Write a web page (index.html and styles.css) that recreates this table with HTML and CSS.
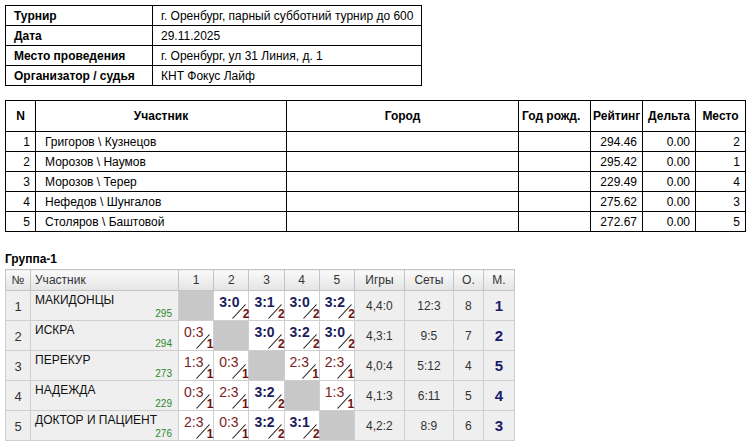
FILE: index.html
```html
<!DOCTYPE html>
<html lang="ru">
<head>
<meta charset="utf-8">
<title>Турнир</title>
<link rel="stylesheet" href="styles.css">
</head>
<body>
<table class="info">
  <colgroup><col class="c-label"><col class="c-value"></colgroup>
  <tr><th>Турнир</th><td>г. Оренбург, парный субботний турнир до 600</td></tr>
  <tr><th>Дата</th><td>29.11.2025</td></tr>
  <tr><th>Место проведения</th><td>г. Оренбург, ул 31 Линия, д. 1</td></tr>
  <tr><th>Организатор / судья</th><td>КНТ Фокус Лайф</td></tr>
</table>

<table class="players">
  <colgroup>
    <col class="p-n"><col class="p-name"><col class="p-city"><col class="p-year">
    <col class="p-rating"><col class="p-delta"><col class="p-place">
  </colgroup>
  <tr class="head">
    <th>N</th><th>Участник</th><th>Город</th><th class="left">Год рожд.</th><th>Рейтинг</th><th>Дельта</th><th>Место</th>
  </tr>
  <tr><td class="num">1</td><td class="name">Григоров \ Кузнецов</td><td></td><td></td><td class="num">294.46</td><td class="num">0.00</td><td class="num">2</td></tr>
  <tr><td class="num">2</td><td class="name">Морозов \ Наумов</td><td></td><td></td><td class="num">295.42</td><td class="num">0.00</td><td class="num">1</td></tr>
  <tr><td class="num">3</td><td class="name">Морозов \ Терер</td><td></td><td></td><td class="num">229.49</td><td class="num">0.00</td><td class="num">4</td></tr>
  <tr><td class="num">4</td><td class="name">Нефедов \ Шунгалов</td><td></td><td></td><td class="num">275.62</td><td class="num">0.00</td><td class="num">3</td></tr>
  <tr><td class="num">5</td><td class="name">Столяров \ Баштовой</td><td></td><td></td><td class="num">272.67</td><td class="num">0.00</td><td class="num">5</td></tr>
</table>

<div class="group-title">Группа-1</div>
<table class="group">
  <colgroup>
    <col class="g-n"><col class="g-name">
    <col class="g-s"><col class="g-s"><col class="g-s"><col class="g-s"><col class="g-s">
    <col class="g-games"><col class="g-sets"><col class="g-pts"><col class="g-pl">
  </colgroup>
  <tr class="ghead">
    <th>№</th><th class="left">Участник</th><th>1</th><th>2</th><th>3</th><th>4</th><th>5</th><th>Игры</th><th>Сеты</th><th>О.</th><th>М.</th>
  </tr>
  <tr>
    <td class="gn">1</td>
    <td class="gname"><div class="nm">МАКИДОНЦЫ</div><div class="rt">295</div></td>
    <td class="self"></td>
    <td class="sc"><div class="cell"><span class="s win">3:0</span><span class="tail"><svg class="sl" viewBox="0 0 17 15"><line x1="0.5" y1="14.5" x2="13.5" y2="0.5"/></svg><b class="d">2</b></span></div></td>
    <td class="sc"><div class="cell"><span class="s win">3:1</span><span class="tail"><svg class="sl" viewBox="0 0 17 15"><line x1="0.5" y1="14.5" x2="13.5" y2="0.5"/></svg><b class="d">2</b></span></div></td>
    <td class="sc"><div class="cell"><span class="s win">3:0</span><span class="tail"><svg class="sl" viewBox="0 0 17 15"><line x1="0.5" y1="14.5" x2="13.5" y2="0.5"/></svg><b class="d">2</b></span></div></td>
    <td class="sc"><div class="cell"><span class="s win">3:2</span><span class="tail"><svg class="sl" viewBox="0 0 17 15"><line x1="0.5" y1="14.5" x2="13.5" y2="0.5"/></svg><b class="d">2</b></span></div></td>
    <td class="gv">4,4:0</td><td class="gv">12:3</td><td class="gv">8</td><td class="gp">1</td>
  </tr>
  <tr>
    <td class="gn">2</td>
    <td class="gname"><div class="nm">ИСКРА</div><div class="rt">294</div></td>
    <td class="sc"><div class="cell"><span class="s loss">0:3</span><span class="tail"><svg class="sl" viewBox="0 0 17 15"><line x1="0.5" y1="14.5" x2="13.5" y2="0.5"/></svg><b class="d">1</b></span></div></td>
    <td class="self"></td>
    <td class="sc"><div class="cell"><span class="s win">3:0</span><span class="tail"><svg class="sl" viewBox="0 0 17 15"><line x1="0.5" y1="14.5" x2="13.5" y2="0.5"/></svg><b class="d">2</b></span></div></td>
    <td class="sc"><div class="cell"><span class="s win">3:2</span><span class="tail"><svg class="sl" viewBox="0 0 17 15"><line x1="0.5" y1="14.5" x2="13.5" y2="0.5"/></svg><b class="d">2</b></span></div></td>
    <td class="sc"><div class="cell"><span class="s win">3:0</span><span class="tail"><svg class="sl" viewBox="0 0 17 15"><line x1="0.5" y1="14.5" x2="13.5" y2="0.5"/></svg><b class="d">2</b></span></div></td>
    <td class="gv">4,3:1</td><td class="gv">9:5</td><td class="gv">7</td><td class="gp">2</td>
  </tr>
  <tr>
    <td class="gn">3</td>
    <td class="gname"><div class="nm">ПЕРЕКУР</div><div class="rt">273</div></td>
    <td class="sc"><div class="cell"><span class="s loss">1:3</span><span class="tail"><svg class="sl" viewBox="0 0 17 15"><line x1="0.5" y1="14.5" x2="13.5" y2="0.5"/></svg><b class="d">1</b></span></div></td>
    <td class="sc"><div class="cell"><span class="s loss">0:3</span><span class="tail"><svg class="sl" viewBox="0 0 17 15"><line x1="0.5" y1="14.5" x2="13.5" y2="0.5"/></svg><b class="d">1</b></span></div></td>
    <td class="self"></td>
    <td class="sc"><div class="cell"><span class="s loss">2:3</span><span class="tail"><svg class="sl" viewBox="0 0 17 15"><line x1="0.5" y1="14.5" x2="13.5" y2="0.5"/></svg><b class="d">1</b></span></div></td>
    <td class="sc"><div class="cell"><span class="s loss">2:3</span><span class="tail"><svg class="sl" viewBox="0 0 17 15"><line x1="0.5" y1="14.5" x2="13.5" y2="0.5"/></svg><b class="d">1</b></span></div></td>
    <td class="gv">4,0:4</td><td class="gv">5:12</td><td class="gv">4</td><td class="gp">5</td>
  </tr>
  <tr>
    <td class="gn">4</td>
    <td class="gname"><div class="nm">НАДЕЖДА</div><div class="rt">229</div></td>
    <td class="sc"><div class="cell"><span class="s loss">0:3</span><span class="tail"><svg class="sl" viewBox="0 0 17 15"><line x1="0.5" y1="14.5" x2="13.5" y2="0.5"/></svg><b class="d">1</b></span></div></td>
    <td class="sc"><div class="cell"><span class="s loss">2:3</span><span class="tail"><svg class="sl" viewBox="0 0 17 15"><line x1="0.5" y1="14.5" x2="13.5" y2="0.5"/></svg><b class="d">1</b></span></div></td>
    <td class="sc"><div class="cell"><span class="s win">3:2</span><span class="tail"><svg class="sl" viewBox="0 0 17 15"><line x1="0.5" y1="14.5" x2="13.5" y2="0.5"/></svg><b class="d">2</b></span></div></td>
    <td class="self"></td>
    <td class="sc"><div class="cell"><span class="s loss">1:3</span><span class="tail"><svg class="sl" viewBox="0 0 17 15"><line x1="0.5" y1="14.5" x2="13.5" y2="0.5"/></svg><b class="d">1</b></span></div></td>
    <td class="gv">4,1:3</td><td class="gv">6:11</td><td class="gv">5</td><td class="gp">4</td>
  </tr>
  <tr>
    <td class="gn">5</td>
    <td class="gname"><div class="nm">ДОКТОР И ПАЦИЕНТ</div><div class="rt">276</div></td>
    <td class="sc"><div class="cell"><span class="s loss">2:3</span><span class="tail"><svg class="sl" viewBox="0 0 17 15"><line x1="0.5" y1="14.5" x2="13.5" y2="0.5"/></svg><b class="d">1</b></span></div></td>
    <td class="sc"><div class="cell"><span class="s loss">0:3</span><span class="tail"><svg class="sl" viewBox="0 0 17 15"><line x1="0.5" y1="14.5" x2="13.5" y2="0.5"/></svg><b class="d">1</b></span></div></td>
    <td class="sc"><div class="cell"><span class="s win">3:2</span><span class="tail"><svg class="sl" viewBox="0 0 17 15"><line x1="0.5" y1="14.5" x2="13.5" y2="0.5"/></svg><b class="d">2</b></span></div></td>
    <td class="sc"><div class="cell"><span class="s win">3:1</span><span class="tail"><svg class="sl" viewBox="0 0 17 15"><line x1="0.5" y1="14.5" x2="13.5" y2="0.5"/></svg><b class="d">2</b></span></div></td>
    <td class="self"></td>
    <td class="gv">4,2:2</td><td class="gv">8:9</td><td class="gv">6</td><td class="gp">3</td>
  </tr>
</table>
</body>
</html>
```
FILE: styles.css
```css
* { box-sizing: border-box; }
html, body { background: #fff; }
body {
  margin: 0;
  padding: 5px;
  font-family: "Liberation Sans", Arial, sans-serif;
  font-size: 12px;
  color: #000;
}
table { border-collapse: collapse; table-layout: fixed; }

/* info table */
.info { width: 416px; }
.info .c-label { width: 147px; }
.info .c-value { width: 269px; }
.info th, .info td {
  border: 1px solid #000;
  height: 20px;
  padding: 0 0 0 8px;
  text-align: left;
  white-space: nowrap;
  line-height: 18px;
}
.info th { font-weight: bold; }

/* players table */
.players { width: 740px; margin-top: 14px; }
.p-n { width: 30px; }
.p-name { width: 251px; }
.p-city { width: 232px; }
.p-year { width: 72px; }
.p-rating { width: 52px; }
.p-delta { width: 53px; }
.p-place { width: 50px; }
.players th, .players td {
  border: 1px solid #000;
  height: 20px;
  padding: 0 4px;
  line-height: 18px;
  white-space: nowrap;
}
.players .head th { height: 31px; font-weight: bold; text-align: center; padding: 0 2px; }
.players .head th.left { text-align: left; padding-left: 3px; }
.players td.num { text-align: right; padding-right: 5px; }
.players td.name { padding-left: 9px; }

/* group */
.group-title { font-weight: bold; margin-top: 20px; line-height: 14px; }
.group { width: 509px; margin-top: 3px; color: #222; }
.g-n { width: 25px; }
.g-name { width: 148px; }
.g-s { width: 35.2px; }
.g-games { width: 50px; }
.g-sets { width: 49px; }
.g-pts { width: 30px; }
.g-pl { width: 31px; }
.group th, .group td { border: 1px solid #cfcfcf; padding: 0; }
.group .ghead th {
  height: 21px;
  font-weight: normal;
  text-align: center;
  color: #333;
  background: linear-gradient(#fafafa, #e4e4e4);
  border-color: #c4c4c4;
}
.group .ghead th.left { text-align: left; padding-left: 4px; }
.group td { height: 30px; background: #efefef; }
.group td.gn { text-align: center; font-size: 13px; color: #333; padding-top: 2px; }
.group td.gname { vertical-align: top; padding: 2px 4px 0 4px; }
.gname .nm { line-height: 15px; color: #111; white-space: nowrap; }
.gname .rt { text-align: right; font-size: 10px; line-height: 11px; color: #2b8a2b; margin-right: 2px; }
.group td.self { background: #c8c8c8; }
.group td.sc { background: #fff; vertical-align: top; }
.group td.gv { text-align: center; font-size: 12px; color: #333; }
.group td.gp { text-align: center; font-size: 15px; font-weight: bold; color: #1b1b6b; }

.cell {
  height: 29px;
  display: flex;
  align-items: flex-start;
  padding: 3px 0 1px 5px;
}
.s { font-size: 14px; line-height: 16px; white-space: nowrap; }
.s.win { font-weight: bold; color: #1c1c5c; }
.s.loss { color: #7a2222; }
.tail {
  align-self: flex-end;
  margin-left: -7px;
  display: grid;
  width: 17px;
  height: 15px;
}
.sl { grid-area: 1 / 1; width: 17px; height: 15px; }
.sl line { stroke: #1a1a1a; stroke-width: 1.1; }
.d {
  grid-area: 1 / 1;
  justify-self: end;
  align-self: end;
  font-size: 12px;
  line-height: 10px;
  font-weight: bold;
  color: #6e1414;
}
```
